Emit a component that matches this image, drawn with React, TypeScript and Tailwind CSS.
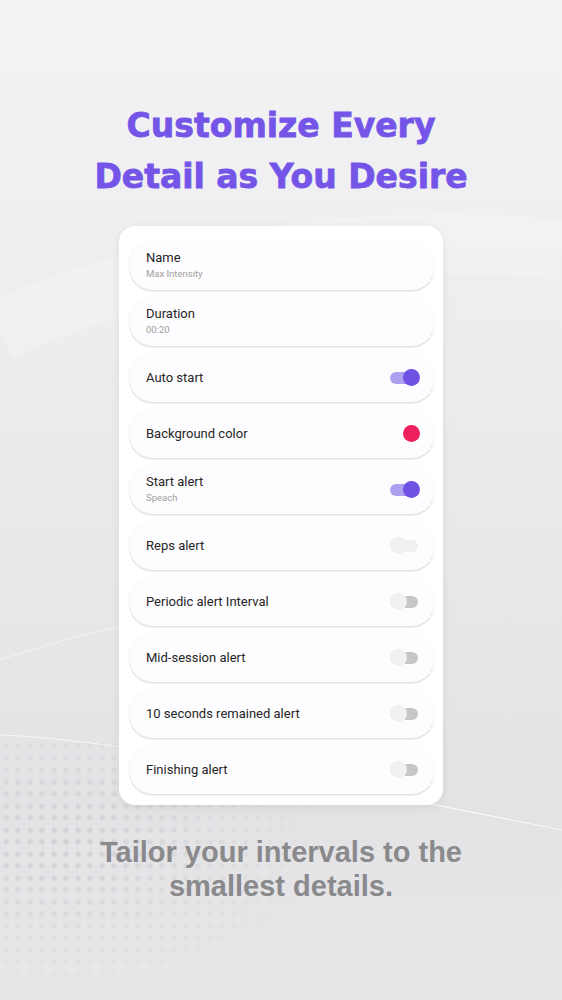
import React from "react";

type Row = {
  label: string;
  sub?: string;
  kind?: "on" | "off" | "faded" | "color";
};

const rows: Row[] = [
  { label: "Name", sub: "Max Intensity" },
  { label: "Duration", sub: "00:20" },
  { label: "Auto start", kind: "on" },
  { label: "Background color", kind: "color" },
  { label: "Start alert", sub: "Speach", kind: "on" },
  { label: "Reps alert", kind: "faded" },
  { label: "Periodic alert Interval", kind: "off" },
  { label: "Mid-session alert", kind: "off" },
  { label: "10 seconds remained alert", kind: "off" },
  { label: "Finishing alert", kind: "off" },
];

function Toggle({ kind }: { kind: "on" | "off" | "faded" }) {
  if (kind === "on") {
    return (
      <div className="relative w-[30px] h-[17px] flex items-center">
        <div className="w-[28px] h-[12px] rounded-full bg-[#ada1ef]" />
        <div className="absolute right-0 top-0 w-[17px] h-[17px] rounded-full bg-[#6f52e3]" />
      </div>
    );
  }
  return (
    <div className="relative w-[30px] h-[17px] flex items-center">
      <div
        className={
          kind === "faded"
            ? "w-[28px] h-[12px] rounded-full bg-[#f0f0f1]"
            : "w-[28px] h-[12px] rounded-full bg-[#c6c6c8]"
        }
      />
      <div className="absolute left-0 top-0 w-[17px] h-[17px] rounded-full bg-[#f1f1f2]" />
    </div>
  );
}

function SettingRow({ row }: { row: Row }) {
  return (
    <div className="h-[49px] rounded-[22px] bg-[#fdfcfe] shadow-[0_1.5px_1.5px_rgba(0,0,0,0.12),-1px_0_3px_rgba(0,0,0,0.03)] pl-4 pr-[14px] flex items-center justify-between">
      <div className="flex flex-col">
        <span className="text-[13px] leading-[16px] text-[#262626]">{row.label}</span>
        {row.sub && (
          <span className="text-[9.5px] leading-[14px] mt-[1px] text-[#a0a0a0]">{row.sub}</span>
        )}
      </div>
      {row.kind === "color" && <div className="w-[17px] h-[17px] rounded-full bg-[#ee1f5d]" />}
      {(row.kind === "on" || row.kind === "off" || row.kind === "faded") && <Toggle kind={row.kind} />}
    </div>
  );
}

export default function App() {
  return (
    <div
      className="relative w-[562px] h-[1000px] overflow-hidden bg-[linear-gradient(180deg,#f3f3f5_0%,#ececee_40%,#e3e3e6_80%,#e7e7e9_100%)]"
      style={{ fontFamily: "Roboto, 'Noto Sans', 'Liberation Sans', sans-serif" }}
    >
      {/* soft background curves */}
      <svg className="absolute inset-0" width="562" height="1000" viewBox="0 0 562 1000">
        <path d="M0 330 C 150 260, 380 230, 562 250" stroke="#ffffff" strokeOpacity="0.18" strokeWidth="60" fill="none" />
        <path d="M0 735 C 120 740, 260 770, 562 830" stroke="#ffffff" strokeOpacity="0.7" strokeWidth="1.2" fill="none" />
        <path d="M0 660 C 60 640, 100 630, 130 625" stroke="#ffffff" strokeOpacity="0.5" strokeWidth="1" fill="none" />
      </svg>
      {/* halftone dots */}
      <div className="absolute left-0 top-[740px] w-[330px] h-[260px] bg-[radial-gradient(circle,rgba(150,150,155,0.22)_2.5px,transparent_3px)] bg-[length:12px_12px] [mask-image:radial-gradient(ellipse_at_20%_40%,black_0%,transparent_70%)]" />

      <div className="relative flex flex-col items-center">
        <h1
          className="mt-[100px] text-center text-[33px] leading-[51px] font-bold text-[#7455e8] [-webkit-text-stroke:0.8px_#7455e8] whitespace-nowrap"
          style={{ fontFamily: "'DejaVu Sans', 'Liberation Sans', sans-serif" }}
        >
          Customize Every
          <br />
          Detail as You Desire
        </h1>

        <div className="mt-[24px] w-[324px] rounded-[16px] bg-white shadow-[0_2px_10px_rgba(0,0,0,0.07)] pt-[15px] pb-[11px] pl-[11px] pr-[9px] flex flex-col gap-[7px]">
          {rows.map((r) => (
            <SettingRow key={r.label} row={r} />
          ))}
        </div>

        <p
          className="mt-[30px] text-center text-[29px] leading-[34px] font-bold text-[#8a8a8c]"
          style={{ fontFamily: "'Liberation Sans', Arial, sans-serif" }}
        >
          Tailor your intervals to the
          <br />
          smallest details.
        </p>
      </div>
    </div>
  );
}
